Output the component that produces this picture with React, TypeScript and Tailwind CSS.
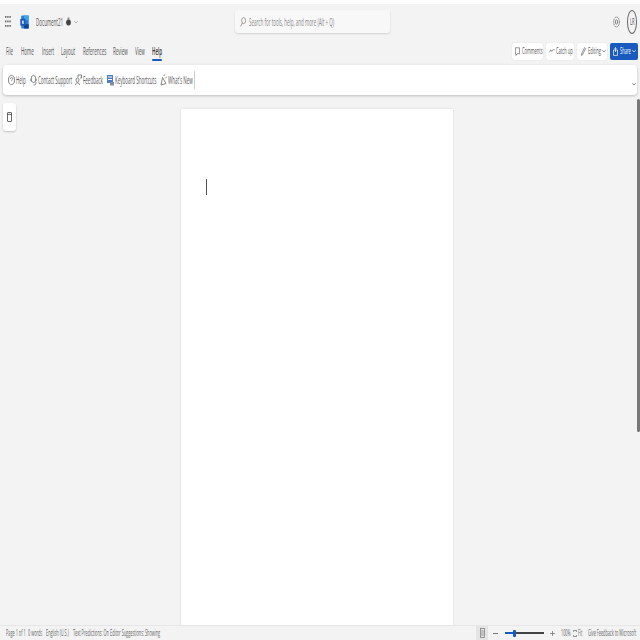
import type { ReactNode } from 'react';

const FONT = "font-['Open_Sans','Liberation_Sans',sans-serif]";

// the reference is squeezed horizontally, so text is drawn wide and scaled down
function Label({ w, children, className = '' }: { w: string; children: ReactNode; className?: string }) {
  return (
    <span className={`block shrink-0 overflow-visible ${w} ${className}`}>
      <span className="block w-max origin-left scale-x-[0.45] whitespace-nowrap">{children}</span>
    </span>
  );
}

function Waffle() {
  return (
    <svg width="6" height="12" viewBox="0 0 6 12" fill="#666" className="shrink-0">
      {[0, 4.5, 9].map(y => [0, 2.2, 4.4].map(x => <rect key={`${x}-${y}`} x={x} y={y} width="1.4" height="1.8" />))}
    </svg>
  );
}

function WordIcon() {
  return (
    <svg width="9" height="14" viewBox="0 0 9 15" className="shrink-0">
      <rect x="1" y="0.5" width="8" height="14" rx="1" fill="#2b7cd3" />
      <rect x="4" y="0.5" width="5" height="5" fill="#41a5ee" />
      <rect x="4" y="10" width="5" height="4.5" fill="#103f91" />
      <rect x="0" y="4" width="5.5" height="7.5" rx="0.5" fill="#185abd" />
      <rect x="2" y="6" width="1.5" height="3.5" fill="#fff" />
    </svg>
  );
}

function Icon({ children }: { children: ReactNode }) {
  return (
    <svg width="7" height="12" viewBox="0 0 7 12" fill="none" stroke="#666" strokeWidth="0.8" className="shrink-0">
      {children}
    </svg>
  );
}

function Chevron({ color = '#666' }: { color?: string }) {
  return (
    <svg width="4" height="4" viewBox="0 0 4 4" fill="none" stroke={color} strokeWidth="0.7" className="shrink-0">
      <path d="M0.3 1.2 2 3 3.7 1.2" />
    </svg>
  );
}

const TABS = [
  { name: 'File', w: 'w-[15px]' },
  { name: 'Home', w: 'w-[21px]' },
  { name: 'Insert', w: 'w-[19px]' },
  { name: 'Layout', w: 'w-[22px]' },
  { name: 'References', w: 'w-[30px]' },
  { name: 'Review', w: 'w-[22px]' },
  { name: 'View', w: 'w-[17px]' },
];

export default function App() {
  return (
    <div className={`${FONT} relative flex h-[640px] w-[640px] flex-col overflow-hidden bg-[#f3f3f3] text-[10px] leading-[14px] text-[#555]`}>
      <div className="h-[4px] shrink-0 bg-white" />

      {/* title bar */}
      <div className="flex h-[35px] shrink-0 items-center pl-[5px] pr-[3px]">
        <Waffle />
        <div className="ml-[9px] flex"><WordIcon /></div>
        <Label w="w-[30px]" className="ml-[7px]">Document21</Label>
        <svg width="5" height="9" viewBox="0 0 5 9" fill="#444" className="shrink-0">
          <ellipse cx="2.5" cy="5.5" rx="2.4" ry="3" />
          <rect x="1.6" y="0.5" width="1.8" height="2.5" fill="#888" />
        </svg>
        <div className="ml-[3px]"><Chevron color="#999" /></div>

        <div className="ml-[157px] flex h-[23px] w-[155px] shrink-0 items-center rounded-[3px] bg-[#f8f8f8] pl-[5px] shadow-[0_1px_2px_rgba(0,0,0,0.14)]">
          <svg width="6" height="10" viewBox="0 0 6 10" fill="none" stroke="#888" strokeWidth="0.8" className="shrink-0">
            <ellipse cx="3.6" cy="3.6" rx="2" ry="3" />
            <path d="M2.4 6 .6 9.4" />
          </svg>
          <Label w="w-[87px]" className="ml-[3px] text-[#888]">Search for tools, help, and more (Alt + Q)</Label>
        </div>

        <svg width="7" height="12" viewBox="0 0 7 12" fill="none" stroke="#666" strokeWidth="0.8" className="ml-auto shrink-0">
          <ellipse cx="3.5" cy="6" rx="2.9" ry="5" strokeDasharray="1.6 0.7" />
          <ellipse cx="3.5" cy="6" rx="1.2" ry="2.1" />
        </svg>
        <div className="ml-[7px] flex h-[24px] w-[10px] shrink-0 items-center justify-center rounded-[50%] border border-[#666]">
          <Label w="w-[5px]" className="text-[9px]">LR</Label>
        </div>
      </div>

      {/* tabs + actions */}
      <div className="flex h-[24px] shrink-0 items-center pl-[6px] pr-[2px]">
        {TABS.map(t => <Label key={t.name} w={t.w}>{t.name}</Label>)}
        <div className="relative">
          <Label w="w-[11px]" className="font-semibold text-[#333]">Help</Label>
          <div className="absolute -bottom-[3px] left-0 h-[2px] w-[10px] rounded-full bg-[#185abd]" />
        </div>

        <div className="ml-auto flex items-center gap-[3px]">
          <div className="flex h-[17px] w-[31px] items-center rounded-[2px] bg-white pl-[3px] shadow-[0_0_1px_rgba(0,0,0,0.2)]">
            <svg width="5" height="9" viewBox="0 0 5 9" fill="none" stroke="#666" strokeWidth="0.7" className="shrink-0">
              <path d="M.4.8h4.2v6H2L1 8.4V6.8H.4z" />
            </svg>
            <Label w="w-[21px]" className="ml-[2px] text-[9px]">Comments</Label>
          </div>
          <div className="flex h-[17px] w-[28px] items-center rounded-[2px] bg-white pl-[3px] shadow-[0_0_1px_rgba(0,0,0,0.2)]">
            <svg width="6" height="4" viewBox="0 0 7 5" fill="none" stroke="#666" strokeWidth="0.8" className="shrink-0">
              <path d="M.3 4 2 1l1.2 2L4.4 1H7" />
            </svg>
            <Label w="w-[16px]" className="ml-[1px] text-[9px]">Catch up</Label>
          </div>
          <div className="flex h-[17px] w-[30px] items-center rounded-[2px] bg-white pl-[4px] shadow-[0_0_1px_rgba(0,0,0,0.2)]">
            <svg width="5" height="9" viewBox="0 0 5 9" fill="none" stroke="#666" strokeWidth="0.7" className="shrink-0">
              <path d="M3.6.6 4.6 1.6 1.4 8 .4 8.4.5 7z" />
            </svg>
            <Label w="w-[14px]" className="ml-[2px] text-[9px]">Editing</Label>
            <Chevron />
          </div>
          <div className="flex h-[17px] w-[28px] items-center rounded-[2px] bg-[#185abd] pl-[3px] text-white">
            <svg width="5" height="9" viewBox="0 0 5 9" fill="none" stroke="#fff" strokeWidth="0.7" className="shrink-0">
              <path d="M.5 3h4v5.4h-4zM2.5 5V.6M1.4 1.6 2.5.6l1.1 1" />
            </svg>
            <Label w="w-[12px]" className="ml-[2px] text-[9px]">Share</Label>
            <Chevron color="#fff" />
          </div>
        </div>
      </div>

      {/* ribbon */}
      <div className="mx-[3px] mt-[2px] flex h-[30px] shrink-0 items-center rounded-[4px] bg-white pl-[5px] pr-[1px] shadow-[0_1px_3px_rgba(0,0,0,0.22)]">
        <Icon><ellipse cx="3.5" cy="6" rx="3" ry="4.6" /><path d="M2.4 5c0-2 2.3-2 2.3-.4 0 1-1.2 1-1.2 2.4" /></Icon>
        <Label w="w-[14px]" className="ml-[1px]">Help</Label>
        <Icon><ellipse cx="3.5" cy="5" rx="2.4" ry="3.6" /><path d="M1 5v2M6 5v2M3.5 11c2 0 2.5-1 2.5-3" /></Icon>
        <Label w="w-[37px]" className="ml-[1px]">Contact Support</Label>
        <Icon><ellipse cx="2.5" cy="6" rx="1.5" ry="2" /><path d="M.5 11c0-3 4-3 4 0M3 3.4V1h3.5v3H5" /></Icon>
        <Label w="w-[24px]" className="ml-[1px]">Feedback</Label>
        <svg width="7" height="12" viewBox="0 0 7 12" className="shrink-0">
          <rect x="0" y="1" width="6" height="8" fill="#4a7fc7" />
          <rect x="1" y="2.5" width="4" height="1" fill="#fff" />
          <rect x="1" y="5" width="4" height="1" fill="#fff" />
          <rect x="3" y="8" width="4" height="3.5" fill="#7f8fa8" />
        </svg>
        <Label w="w-[45px]" className="ml-[1px]">Keyboard Shortcuts</Label>
        <Icon><path d="M1 11 6 9.5 2.5 3.5zM4 2 4.6.5M5.4 4 6.8 3" /></Icon>
        <Label w="w-[26px]" className="ml-[1px]">What&apos;s New</Label>
        <div className="h-[18px] w-px bg-[#ccc]" />
        <div className="ml-auto mt-[8px]"><Chevron color="#555" /></div>
      </div>

      {/* document area */}
      <div className="flex min-h-0 flex-1 pl-[3px]">
        <div className="mt-[8px] flex h-[28px] w-[13px] shrink-0 items-center justify-center rounded-[3px] bg-white shadow-[0_1px_2px_rgba(0,0,0,0.2)]">
          <svg width="5" height="10" viewBox="0 0 5 10" fill="none" stroke="#444" strokeWidth="0.8">
            <rect x=".5" y=".5" width="4" height="9" rx="0.5" />
            <path d="M.5 2.4h4" />
          </svg>
        </div>
        <div className="ml-[165px] mt-[14px] w-[272px] shrink-0 bg-white pl-[25px] pt-[70px] shadow-[0_0_2px_rgba(0,0,0,0.14)]">
          <div className="h-[16px] w-px bg-[#555]" />
        </div>
      </div>

      {/* status bar */}
      <div className="flex h-[15px] shrink-0 items-center border-t border-[#e6e6e6] pl-[6px] text-[8.5px] text-[#666]">
        <Label w="w-[22px]">Page 1 of 1</Label>
        <Label w="w-[18px]">0 words</Label>
        <Label w="w-[27px]">English (U.S.)</Label>
        <Label w="w-[37px]">Text Predictions: On</Label>
        <Label w="w-[50px]">Editor Suggestions: Showing</Label>

        <div className="ml-[316px] flex h-[15px] w-[12px] shrink-0 items-center justify-center bg-[#e4e4e4]">
          <svg width="5" height="10" viewBox="0 0 5 10" fill="none" stroke="#777" strokeWidth="0.7">
            <rect x=".5" y=".5" width="4" height="9" />
            <path d="M1.2 3h2.6M1.2 5h2.6M1.2 7h2.6" />
          </svg>
        </div>
        <div className="ml-[5px] h-px w-[5px] shrink-0 bg-[#777]" />
        <div className="ml-[7px] flex w-[39px] shrink-0 items-center">
          <div className="h-[2px] w-[8px] bg-[#185abd]" />
          <div className="h-[7px] w-[3px] rounded-[1px] bg-[#185abd]" />
          <div className="h-[1.5px] w-[28px] bg-[#444]" />
        </div>
        <svg width="5" height="7" viewBox="0 0 5 7" stroke="#777" strokeWidth="0.8" className="ml-[6px] shrink-0">
          <path d="M0 3.5h5M2.5 1v5" />
        </svg>
        <Label w="w-[12px]" className="ml-[6px]">100%</Label>
        <svg width="4" height="7" viewBox="0 0 4 7" fill="none" stroke="#666" strokeWidth="0.7" className="shrink-0">
          <path d="M.4 2V.5h3.2V2M.4 5v1.5h3.2V5" />
        </svg>
        <Label w="w-[9px]" className="ml-[1px]">Fit</Label>
        <Label w="w-[48px]" className="ml-[1px]">Give Feedback to Microsoft</Label>
      </div>

      {/* scrollbar */}
      <div className="absolute right-0 top-[99px] h-[333px] w-[3px] rounded-full bg-[#777]" />
    </div>
  );
}
